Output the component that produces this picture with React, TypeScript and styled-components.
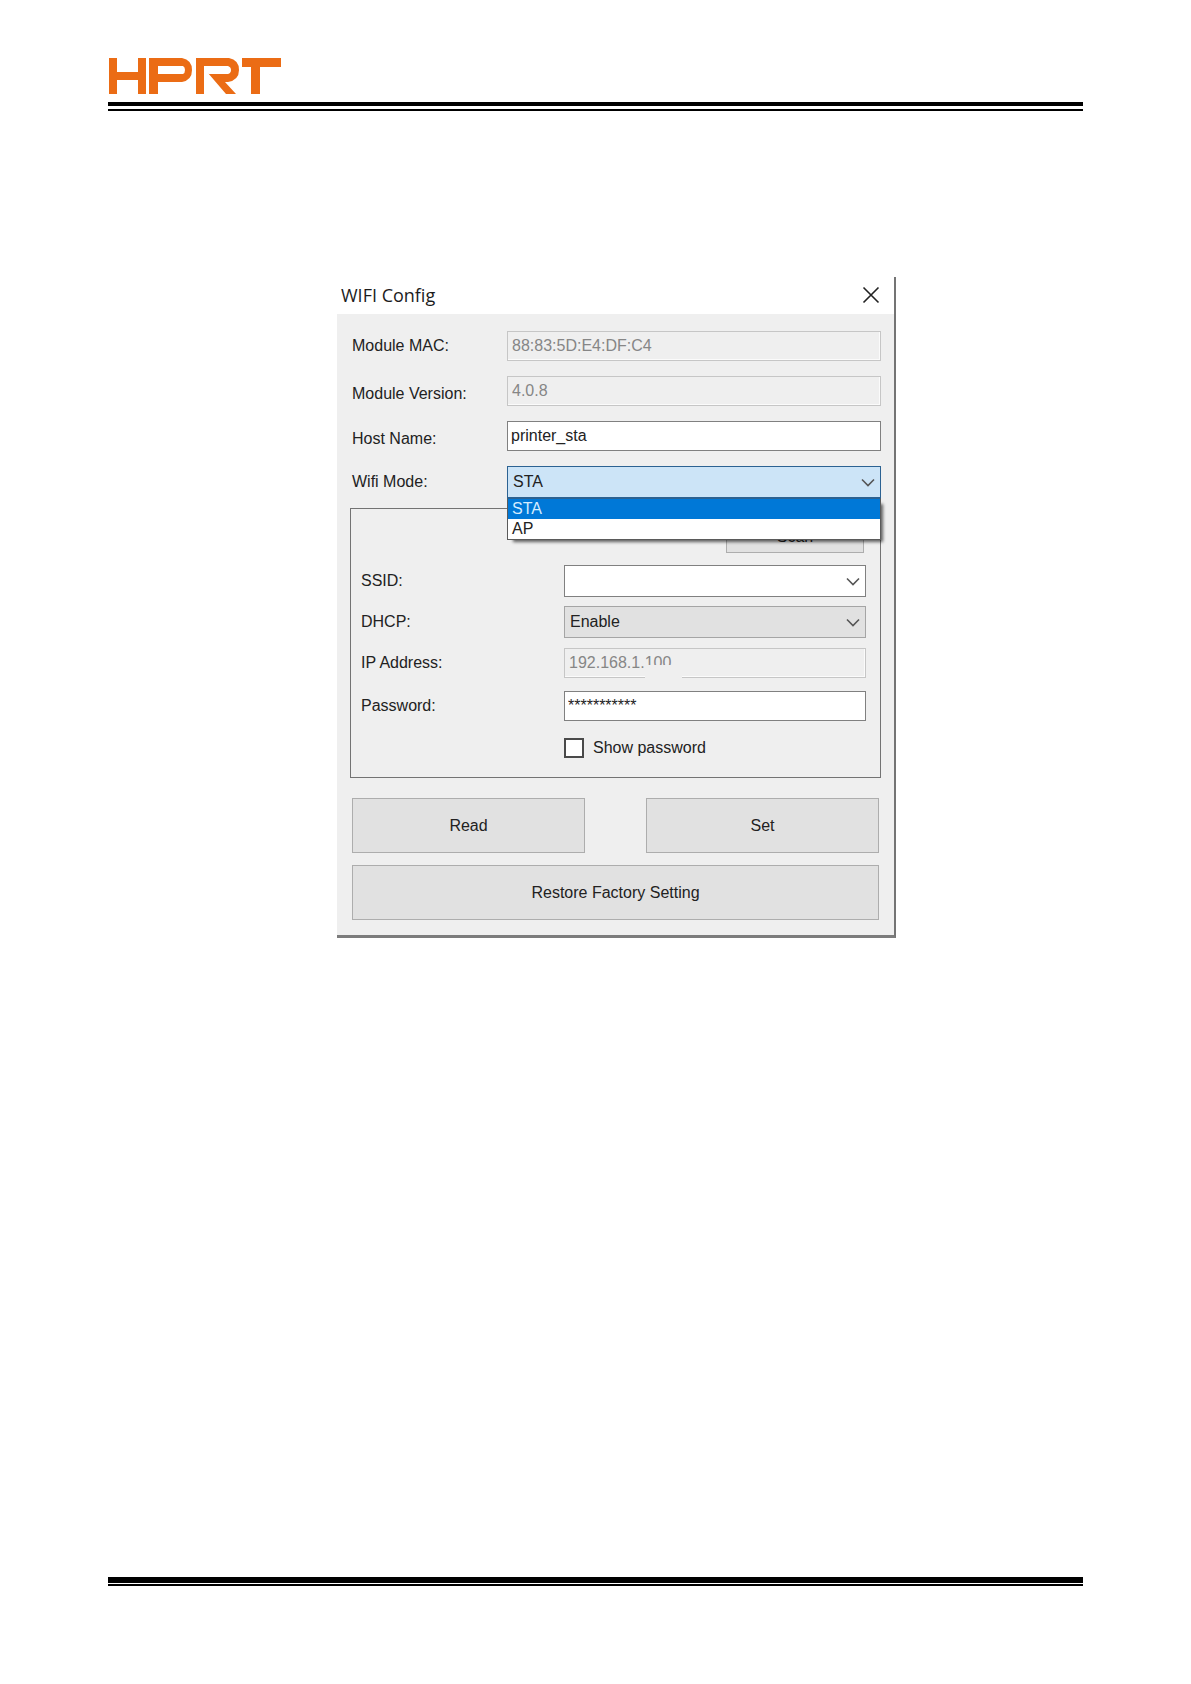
import React, { useState } from "react";
import styled, { createGlobalStyle } from "styled-components";

const GlobalStyle = createGlobalStyle`
  *, *::before, *::after { box-sizing: border-box; }
  html { height: 100%; }
  body {
    margin: 0;
    min-height: 100%;
    background: #fff;
    color: #222;
    font-family: "Liberation Sans", Arial, sans-serif;
    font-size: 16px;
    line-height: 24px;
  }
  button, input, select { font: inherit; color: inherit; margin: 0; border-radius: 0; }
`;

const Page = styled.div`
  display: flex;
  flex-direction: column;
  min-height: 100vh;
  padding: 58px 108px 98px;
`;

const Header = styled.header`
  display: flex;
  flex-direction: column;
  gap: 8px;
`;

const Logo = styled.svg`
  display: block;
  width: 174px;
  height: 36px;
  fill: #eb6c15;
`;

const Rule = styled.div<{ $thick: number; $gap: number }>`
  border-top: ${(p) => p.$thick}px solid #000;
  border-bottom: 2px solid #000;
  height: ${(p) => p.$thick + p.$gap + 2}px;
`;

const Main = styled.main`
  flex: 1;
  display: flex;
  justify-content: center;
  align-items: flex-start;
  padding: 166px 0 48px 42px;
`;

const Dialog = styled.section`
  width: 100%;
  max-width: 559px;
  background: #efefef;
  border-right: 2px solid #747474;
  border-bottom: 3px solid #7c7c7c;
`;

const TitleBar = styled.header`
  display: flex;
  align-items: center;
  justify-content: space-between;
  height: 37px;
  padding: 0 14px 2px 4px;
  background: #fff;
`;

const Title = styled.h1`
  margin: 0;
  font: 400 18px/24px "Open Sans", "Noto Sans", sans-serif;
  color: #1c1c1c;
`;

const CloseButton = styled.button`
  display: flex;
  padding: 0;
  border: 0;
  background: none;
  svg { width: 18px; height: 18px; stroke: #222; fill: none; stroke-width: 1.6; }
`;

const Form = styled.form`
  display: flex;
  flex-direction: column;
  padding: 17px 13px 15px;
`;

const Stack = styled.div<{ $gap: number; $indent?: number }>`
  display: flex;
  flex-direction: column;
  gap: ${(p) => p.$gap}px;
  padding-left: ${(p) => p.$indent ?? 0}px;
`;

const Row = styled.div<{ $labelWidth: number; $low?: boolean }>`
  display: grid;
  grid-template-columns: ${(p) => p.$labelWidth}px 1fr;
  align-items: ${(p) => (p.$low ? "end" : "center")};
`;

const TextInput = styled.input`
  display: block;
  width: 100%;
  height: 30px;
  padding: 0 3px;
  border: 1px solid #808080;
  background: #fff;
  outline: none;
  &:disabled {
    padding: 0 4px;
    border-color: #c6c6c6;
    box-shadow: inset -1px -1px #fbfbfb;
    background: #efefef;
    color: #868686;
  }
`;

const SelectBox = styled.div`
  position: relative;
  svg {
    position: absolute;
    right: 6px;
    top: 12px;
    width: 14px;
    height: 9px;
    fill: none;
    stroke: #555;
    stroke-width: 1.6;
    pointer-events: none;
  }
`;

const Select = styled.select<{ $tone: "open" | "plain" | "grey" }>`
  display: block;
  appearance: none;
  width: 100%;
  height: 32px;
  padding: 0 24px 0 5px;
  outline: none;
  border: 1px solid
    ${(p) => ({ open: "#2c6292", plain: "#808080", grey: "#a5a5a5" })[p.$tone]};
  background: ${(p) => ({ open: "#cce4f7", plain: "#fff", grey: "#e1e1e1" })[p.$tone]};
`;

const OptionList = styled.ul`
  position: absolute;
  z-index: 1;
  top: 100%;
  left: 0;
  right: 0;
  margin: 0;
  padding: 0;
  list-style: none;
  border: 1px solid #5a5a5a;
  border-top-color: #2c6292;
  background: #fff;
  box-shadow: 4px 4px 3px -2px rgba(0, 0, 0, 0.6);
`;

const Option = styled.li<{ $active: boolean }>`
  padding: 0 4px;
  line-height: 20px;
  background: ${(p) => (p.$active ? "#0078d7" : "#fff")};
  color: ${(p) => (p.$active ? "#d4ecff" : "#222")};
`;

const Group = styled.div`
  display: flex;
  flex-direction: column;
  gap: 10px;
  margin-top: 10px;
  padding: 11px 14px 17px 10px;
  border: 1px solid #737373;
`;

const Button = styled.button<{ $small?: boolean }>`
  flex: ${(p) => (p.$small ? "0 0 138px" : "1")};
  height: ${(p) => (p.$small ? 33 : 55)}px;
  padding: 0;
  border: 1px solid #adadad;
  background: #e1e1e1;
`;

const ScanBar = styled.div`
  display: flex;
  justify-content: flex-end;
  padding: 0 2px 3px 0;
`;

const Erased = styled.div`
  position: relative;
  &::after {
    content: "";
    position: absolute;
    left: 81px;
    bottom: 0;
    width: 37px;
    height: 13px;
    background: #efefef;
  }
`;

const CheckLabel = styled.label`
  display: flex;
  align-items: center;
  gap: 9px;
  padding-top: 2px;
`;

const CheckBox = styled.input`
  appearance: none;
  width: 20px;
  height: 20px;
  border: 2px solid #4a4a4a;
  background: #fff;
  &:checked { background: #333; }
`;

const Actions = styled.div<{ $top: number }>`
  display: flex;
  gap: 61px;
  padding: ${(p) => p.$top}px 2px 0;
`;

const Chevron = () => (
  <svg viewBox="0 0 14 9" aria-hidden="true">
    <path d="M1 1.5 7 7.5 13 1.5" />
  </svg>
);

const modes = ["STA", "AP"];

export default function App() {
  const [mode, setMode] = useState("STA");
  const [host, setHost] = useState("printer_sta");
  const [password, setPassword] = useState("***********");

  return (
    <>
      <GlobalStyle />
      <Page>
        <Header>
          <Logo viewBox="0 0 174 36" role="img" aria-label="HPRT">
            <path d="M1 0H9V14H30V0H38V36H30V22H9V36H1Z" />
            <path
              fillRule="evenodd"
              d="M41 0H74Q84 2 84 12Q84 22 74 24H50V36H41ZM50 8V16H75Q77 15 77 12Q77 9 75 8Z"
            />
            <path d="M88 0H121Q131 2 131 12Q131 22 120 24H117L128 36H118L100 15L101 16H120Q123 15 123 12Q123 9 120 8H96V36H88Z" />
            <path d="M134 0H173V9H152V36H143V9H134Z" />
          </Logo>
          <Rule $thick={4} $gap={3} />
        </Header>
        <Main>
          <Dialog aria-label="WIFI Config">
            <TitleBar>
              <Title>WIFI Config</Title>
              <CloseButton type="button" aria-label="Close">
                <svg viewBox="0 0 18 18">
                  <path d="M1.5 1.5 16.5 16.5M16.5 1.5 1.5 16.5" />
                </svg>
              </CloseButton>
            </TitleBar>
            <Form onSubmit={(e) => e.preventDefault()}>
              <Stack $gap={15} $indent={2}>
                <Row $labelWidth={155}>
                  <label htmlFor="mac">Module MAC:</label>
                  <TextInput id="mac" value="88:83:5D:E4:DF:C4" disabled />
                </Row>
                <Row $labelWidth={155} $low>
                  <label htmlFor="version">Module Version:</label>
                  <TextInput id="version" value="4.0.8" disabled />
                </Row>
                <Row $labelWidth={155} $low>
                  <label htmlFor="host">Host Name:</label>
                  <TextInput id="host" value={host} onChange={(e) => setHost(e.target.value)} />
                </Row>
                <Row $labelWidth={155}>
                  <label htmlFor="mode">Wifi Mode:</label>
                  <SelectBox>
                    <Select id="mode" $tone="open" value={mode} onChange={(e) => setMode(e.target.value)}>
                      {modes.map((m) => (
                        <option key={m}>{m}</option>
                      ))}
                    </Select>
                    <Chevron />
                    <OptionList>
                      {modes.map((m) => (
                        <Option key={m} $active={m === mode} onClick={() => setMode(m)}>
                          {m}
                        </Option>
                      ))}
                    </OptionList>
                  </SelectBox>
                </Row>
              </Stack>
              <Group>
                <Stack $gap={9}>
                  <ScanBar>
                    <Button $small type="button">Scan</Button>
                  </ScanBar>
                  <Row $labelWidth={203}>
                    <label htmlFor="ssid">SSID:</label>
                    <SelectBox>
                      <Select id="ssid" $tone="plain" />
                      <Chevron />
                    </SelectBox>
                  </Row>
                  <Row $labelWidth={203}>
                    <label htmlFor="dhcp">DHCP:</label>
                    <SelectBox>
                      <Select id="dhcp" $tone="grey" defaultValue="Enable">
                        <option>Enable</option>
                        <option>Disable</option>
                      </Select>
                      <Chevron />
                    </SelectBox>
                  </Row>
                </Stack>
                <Stack $gap={13}>
                  <Row $labelWidth={203}>
                    <label htmlFor="ip">IP Address:</label>
                    <Erased>
                      <TextInput id="ip" value="192.168.1.100" disabled />
                    </Erased>
                  </Row>
                  <Row $labelWidth={203}>
                    <label htmlFor="password">Password:</label>
                    <TextInput id="password" value={password} onChange={(e) => setPassword(e.target.value)} />
                  </Row>
                  <Row $labelWidth={203}>
                    <span />
                    <CheckLabel>
                      <CheckBox type="checkbox" />
                      Show password
                    </CheckLabel>
                  </Row>
                </Stack>
              </Group>
              <Actions $top={20}>
                <Button type="button">Read</Button>
                <Button type="submit">Set</Button>
              </Actions>
              <Actions $top={12}>
                <Button type="button">Restore Factory Setting</Button>
              </Actions>
            </Form>
          </Dialog>
        </Main>
        <Rule as="footer" $thick={6} $gap={1} />
      </Page>
    </>
  );
}
